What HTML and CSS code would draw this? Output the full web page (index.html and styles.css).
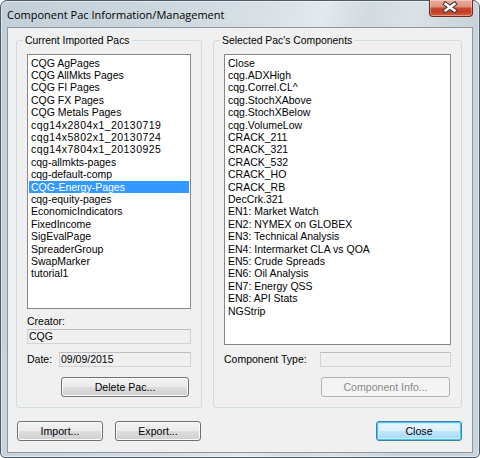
FILE: index.html
```html
<!DOCTYPE html>
<html>
<head>
<title>Component Pac Information/Management</title>
<link rel="stylesheet" href="styles.css">
</head>
<body>

<div class="window">

  <div class="titlebar">
    <span class="title">Component Pac Information/Management</span>
    <button class="close-x">
      <svg width="44" height="17" viewBox="0 0 44 17">
        <path d="M16.5 5 L25.5 11.5 M25.5 5 L16.5 11.5" stroke="#4a3a38" stroke-width="4.6" stroke-linecap="square" fill="none"/>
        <path d="M16.5 5 L25.5 11.5 M25.5 5 L16.5 11.5" stroke="#ffffff" stroke-width="2.4" stroke-linecap="square" fill="none"/>
      </svg>
    </button>
  </div>

  <div class="client">
    <div class="groups">

      <fieldset class="grp grp-left">
        <legend>Current Imported Pacs</legend>
        <div class="grp-body">
          <ul class="list list-pacs">
            <li>CQG AgPages</li>
            <li>CQG AllMkts Pages</li>
            <li>CQG FI Pages</li>
            <li>CQG FX Pages</li>
            <li>CQG Metals Pages</li>
            <li class="num">cqg14x2804x1_20130719</li>
            <li class="num">cqg14x5802x1_20130724</li>
            <li class="num">cqg14x7804x1_20130925</li>
            <li>cqg-allmkts-pages</li>
            <li>cqg-default-comp</li>
            <li class="sel">CQG-Energy-Pages</li>
            <li>cqg-equity-pages</li>
            <li>EconomicIndicators</li>
            <li>FixedIncome</li>
            <li>SigEvalPage</li>
            <li>SpreaderGroup</li>
            <li>SwapMarker</li>
            <li>tutorial1</li>
          </ul>
          <div class="lbl lbl-creator">Creator:</div>
          <div class="field field-creator">CQG</div>
          <div class="row row-date">
            <span class="lbl">Date:</span>
            <div class="field field-date">09/09/2015</div>
          </div>
          <button class="btn btn-delete">Delete Pac...</button>
        </div>
      </fieldset>

      <fieldset class="grp grp-right">
        <legend>Selected Pac's Components</legend>
        <div class="grp-body">
          <ul class="list list-comps">
            <li>Close</li>
            <li>cqg.ADXHigh</li>
            <li>cqg.Correl.CL^</li>
            <li>cqg.StochXAbove</li>
            <li>cqg.StochXBelow</li>
            <li>cqg.VolumeLow</li>
            <li>CRACK_211</li>
            <li>CRACK_321</li>
            <li>CRACK_532</li>
            <li>CRACK_HO</li>
            <li>CRACK_RB</li>
            <li>DecCrk.321</li>
            <li>EN1: Market Watch</li>
            <li>EN2: NYMEX on GLOBEX</li>
            <li>EN3: Technical Analysis</li>
            <li>EN4: Intermarket CLA vs QOA</li>
            <li>EN5: Crude Spreads</li>
            <li>EN6: Oil Analysis</li>
            <li>EN7: Energy QSS</li>
            <li>EN8: API Stats</li>
            <li>NGStrip</li>
          </ul>
          <div class="row row-type">
            <span class="lbl">Component Type:</span>
            <div class="field field-type"></div>
          </div>
          <button class="btn btn-info" disabled>Component Info...</button>
        </div>
      </fieldset>

    </div>

    <div class="actions">
      <button class="btn">Import...</button>
      <button class="btn">Export...</button>
      <button class="btn btn-default">Close</button>
    </div>
  </div>

</div>

</body>
</html>
```

FILE: styles.css
```css
body { margin: 0; background: #ffffff; font-family: "Liberation Sans", Arial, sans-serif; }

/* window frame */
.window { width: 480px; height: 458px; box-sizing: border-box;
          border: 1px solid #4f5b66;
          border-radius: 7px 7px 5px 5px;
          padding: 0 6px 4px 6px;
          box-shadow: inset 0 0 0 1px rgba(255,255,255,0.45);
          background: linear-gradient(100deg, #c3cfd8 0%, #cdd7de 30%, #d9e1e6 48%, #e3e9ec 58%, #d2dbe1 66%, #dbe2e6 74%, #c7d2da 86%, #c9d4dc 100%); }

.titlebar { height: 26px; display: flex; align-items: center; }
.title { font-family: "Open Sans", "Liberation Sans", sans-serif; font-size: 11px; color: #000; padding-top: 1px; }

.close-x { margin-left: auto; align-self: flex-start; margin-top: -1px;
           width: 44px; height: 17px; padding: 0;
           border: 1px solid #6e2a1e; border-top: none;
           border-radius: 0 0 4px 4px;
           box-shadow: inset 0 0 0 1px rgba(255,255,255,0.35);
           background: linear-gradient(#e9ab9d 0%, #e09581 40%, #c9492e 52%, #c23d22 75%, #d8654a 100%); }
.close-x svg { display: block; margin: -1px 0 0 -1px; }

/* client area */
.client { height: 426px; box-sizing: border-box;
          border: 1px solid #8b97a2;
          background: #f0f0f0;
          padding: 6px 10px 11px 8px;
          font-size: 10.5px; color: #000; }

.groups { display: flex; gap: 11px; height: 374px; }

fieldset.grp { margin: 0; padding: 7px 10px 10px 10px; min-width: 0;
               box-sizing: border-box;
               border: 1px solid #d0dae1; border-radius: 3px; }
fieldset.grp legend { margin-left: -4px; padding: 0 2px; line-height: 13px; font-size: 10.4px; }
.grp-left { width: 186px; }
.grp-right { width: 249px; padding-left: 11px; }
.grp-right legend { margin-left: -5px; }

.grp-body { display: flex; flex-direction: column; }

/* list boxes */
.list { margin: 0; padding: 1.5px 1px 1px 1px; list-style: none;
        box-sizing: border-box; overflow: hidden;
        border: 1px solid #828790; background: #fff; }
.list li { line-height: 12.4px; padding-left: 2px; white-space: nowrap; }
.list li.num { letter-spacing: 0.45px; }
.list li.sel { background: #3399ff; color: #fff; }
.list-pacs { height: 255px; }
.list-comps { height: 291px; }

.lbl { line-height: 12.4px; white-space: nowrap; }
.lbl-creator { margin-top: 5.5px; }

.field { height: 15px; box-sizing: border-box;
         border: 1px solid #d2d2d2; border-top-color: #bdbdbd;
         background: #f0f0f0;
         padding-left: 1px; line-height: 13px; }
.field-creator { margin-top: 2px; }

.row { display: flex; align-items: center; }
.row-date { margin-top: 8px; }
.row-type { margin-top: 7px; }
.field-date { width: 132px; margin-left: auto; }
.field-type { width: 131px; margin-left: auto; }

/* buttons */
.btn { width: 86px; height: 20px; padding: 0; box-sizing: border-box;
       font-family: "Liberation Sans", Arial, sans-serif; font-size: 10.6px; color: #000;
       border: 1px solid #707070; border-radius: 3px;
       box-shadow: inset 0 0 0 1px #fbfbfb;
       background: linear-gradient(#f2f2f2 0%, #ebebeb 50%, #dddddd 51%, #cfcfcf 100%); }
.btn-delete { width: 128px; margin-top: 10px; align-self: flex-end; margin-right: 2px; }
.btn-info { width: 129px; margin-top: 10px; align-self: flex-end; margin-right: 1px;
            color: #8b8b8b; border-color: #adb2b5; box-shadow: none; background: #f4f4f4; }
.btn-default { margin-left: auto; border-color: #3c7fb1;
               box-shadow: inset 0 0 0 1px #48c6f4, inset 0 0 0 2px #c8ecfb;
               background: linear-gradient(#eaf6fd 0%, #d9f0fc 50%, #bee6fd 51%, #a7d9f5 100%); }

.actions { display: flex; gap: 12px; margin-top: 13px; padding-left: 1px; }
```
